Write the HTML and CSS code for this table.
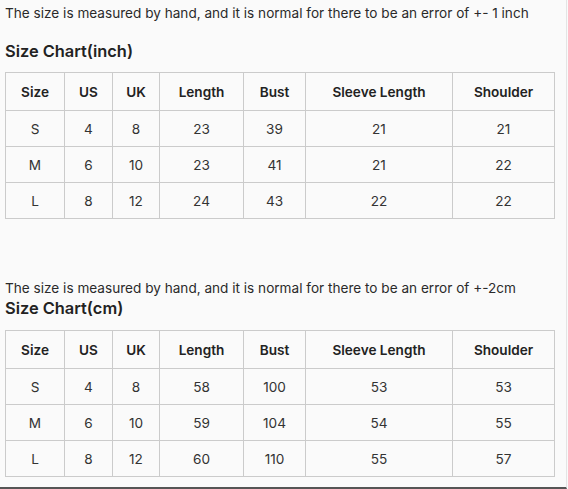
FILE: index.html
```html
<!DOCTYPE html>
<html lang="en">
<head>
<meta charset="utf-8">
<title>Size Chart</title>
<link rel="stylesheet" href="styles.css">
</head>
<body>
<div class="page">
  <section class="chart chart-inch">
    <p class="note">The size is measured by hand, and it is normal for there to be an error of +- 1 inch</p>
    <h2 class="title">Size Chart(inch)</h2>
    <table class="size-table">
      <colgroup>
        <col class="c-size"><col class="c-us"><col class="c-uk"><col class="c-length"><col class="c-bust"><col class="c-sleeve"><col class="c-shoulder">
      </colgroup>
      <thead>
        <tr><th>Size</th><th>US</th><th>UK</th><th>Length</th><th>Bust</th><th>Sleeve Length</th><th>Shoulder</th></tr>
      </thead>
      <tbody>
        <tr><td>S</td><td>4</td><td>8</td><td>23</td><td>39</td><td>21</td><td>21</td></tr>
        <tr><td>M</td><td>6</td><td>10</td><td>23</td><td>41</td><td>21</td><td>22</td></tr>
        <tr><td>L</td><td>8</td><td>12</td><td>24</td><td>43</td><td>22</td><td>22</td></tr>
      </tbody>
    </table>
  </section>
  <section class="chart chart-cm">
    <p class="note">The size is measured by hand, and it is normal for there to be an error of +-2cm</p>
    <h2 class="title">Size Chart(cm)</h2>
    <table class="size-table">
      <colgroup>
        <col class="c-size"><col class="c-us"><col class="c-uk"><col class="c-length"><col class="c-bust"><col class="c-sleeve"><col class="c-shoulder">
      </colgroup>
      <thead>
        <tr><th>Size</th><th>US</th><th>UK</th><th>Length</th><th>Bust</th><th>Sleeve Length</th><th>Shoulder</th></tr>
      </thead>
      <tbody>
        <tr><td>S</td><td>4</td><td>8</td><td>58</td><td>100</td><td>53</td><td>53</td></tr>
        <tr><td>M</td><td>6</td><td>10</td><td>59</td><td>104</td><td>54</td><td>55</td></tr>
        <tr><td>L</td><td>8</td><td>12</td><td>60</td><td>110</td><td>55</td><td>57</td></tr>
      </tbody>
    </table>
  </section>
</div>
</body>
</html>
```

FILE: styles.css
```css
html, body {
  margin: 0;
  padding: 0;
  background: #fafafa;
}
body {
  font-family: Inter, "Noto Sans", "Liberation Sans", sans-serif;
  color: #222;
}
.page {
  box-sizing: border-box;
  width: 567px;
  height: 489px;
  padding-left: 5px;
  border-right: 1px solid #e4e4e4;
  border-bottom: 2px solid #555;
  overflow: hidden;
}
.note {
  margin: 0;
  font-size: 13.6px;
  line-height: 20px;
  color: #2a2a2a;
}
.chart-inch .note {
  padding-top: 3px;
}
.title {
  margin: 0;
  font-size: 16.4px;
  font-weight: 600;
  line-height: 22px;
  color: #222;
}
.chart-inch .title {
  margin-top: 17px;
}
.chart-inch .size-table {
  margin-top: 10px;
}
.chart-cm {
  padding-top: 59px;
}
.chart-cm .title {
  margin-top: -1px;
}
.chart-cm .size-table {
  margin-top: 11px;
}
.size-table {
  border-collapse: collapse;
  table-layout: fixed;
  width: 549px;
  font-size: 13.6px;
}
.c-size { width: 59px; }
.c-us { width: 48px; }
.c-uk { width: 47px; }
.c-length { width: 84px; }
.c-bust { width: 62px; }
.c-sleeve { width: 147px; }
.c-shoulder { width: 102px; }
.size-table th,
.size-table td {
  border: 1px solid #cbcbcb;
  text-align: center;
  padding: 0;
}
.size-table th {
  height: 37px;
  font-weight: 600;
  color: #222;
}
.size-table td {
  height: 35px;
  font-weight: 400;
  color: #333;
}
```
